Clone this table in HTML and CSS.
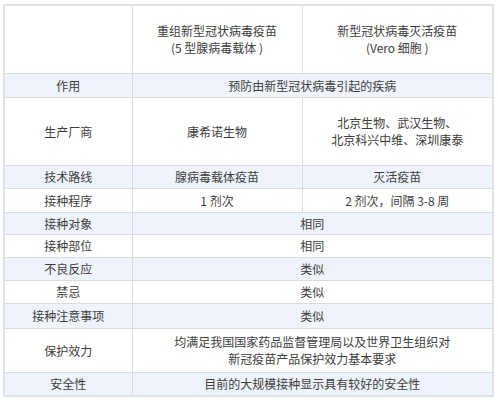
FILE: index.html
```html
<!DOCTYPE html>
<html lang="zh">
<head>
<meta charset="utf-8">
<link rel="stylesheet" href="styles.css">
</head>
<body>
<div class="wrap">
<table class="cmp">
  <colgroup>
    <col class="c1"><col class="c2"><col class="c3">
  </colgroup>
  <tr class="r68 white">
    <td></td>
    <td><span class="ln">重组新型冠状病毒疫苗</span><span class="ln">(5 型腺病毒载体 )</span></td>
    <td><span class="ln">新型冠状病毒灭活疫苗</span><span class="ln">(Vero 细胞 )</span></td>
  </tr>
  <tr class="r24 blue">
    <td>作用</td>
    <td colspan="2">预防由新型冠状病毒引起的疾病</td>
  </tr>
  <tr class="r68 white">
    <td>生产厂商</td>
    <td>康希诺生物</td>
    <td><span class="ln">北京生物、武汉生物、</span><span class="ln">北京科兴中维、深圳康泰</span></td>
  </tr>
  <tr class="r23 blue">
    <td>技术路线</td>
    <td>腺病毒载体疫苗</td>
    <td>灭活疫苗</td>
  </tr>
  <tr class="r24 white">
    <td>接种程序</td>
    <td>1 剂次</td>
    <td>2 剂次，间隔 3-8 周</td>
  </tr>
  <tr class="r22 blue">
    <td>接种对象</td>
    <td colspan="2">相同</td>
  </tr>
  <tr class="r23 white">
    <td>接种部位</td>
    <td colspan="2">相同</td>
  </tr>
  <tr class="r23 blue">
    <td>不良反应</td>
    <td colspan="2">类似</td>
  </tr>
  <tr class="r23 white">
    <td>禁忌</td>
    <td colspan="2">类似</td>
  </tr>
  <tr class="r25 blue">
    <td>接种注意事项</td>
    <td colspan="2">类似</td>
  </tr>
  <tr class="r44 white">
    <td>保护效力</td>
    <td colspan="2"><span class="ln">均满足我国国家药品监督管理局以及世界卫生组织对</span><span class="ln">新冠疫苗产品保护效力基本要求</span></td>
  </tr>
  <tr class="r24 blue">
    <td>安全性</td>
    <td colspan="2">目前的大规模接种显示具有较好的安全性</td>
  </tr>
</table>
</div>
</body>
</html>
```
FILE: styles.css
```css
html, body {
  margin: 0;
  padding: 0;
  background: #ffffff;
}
.wrap {
  padding: 4px 0 0 3px;
}
.cmp {
  border-collapse: collapse;
  table-layout: fixed;
  width: 489px;
  font-family: "Noto Sans CJK SC", "Noto Sans", sans-serif;
  font-size: 12px;
  line-height: 17px;
  color: #3d3d3d;
  border: 2px solid #e2e2e2;
}
.c1 { width: 128px; }
.c2 { width: 170px; }
.c3 { width: 191px; }
.cmp td {
  border: 1px solid #dcdcdc;
  text-align: center;
  vertical-align: middle;
  padding: 0 4px;
}
.ln {
  display: block;
}
.white { background: #ffffff; }
.blue { background: #eef3fc; }
.r68 { height: 68px; }
.r44 { height: 44px; }
.r25 { height: 25px; }
.r24 { height: 24px; }
.r23 { height: 23px; }
.r22 { height: 22px; }
```
